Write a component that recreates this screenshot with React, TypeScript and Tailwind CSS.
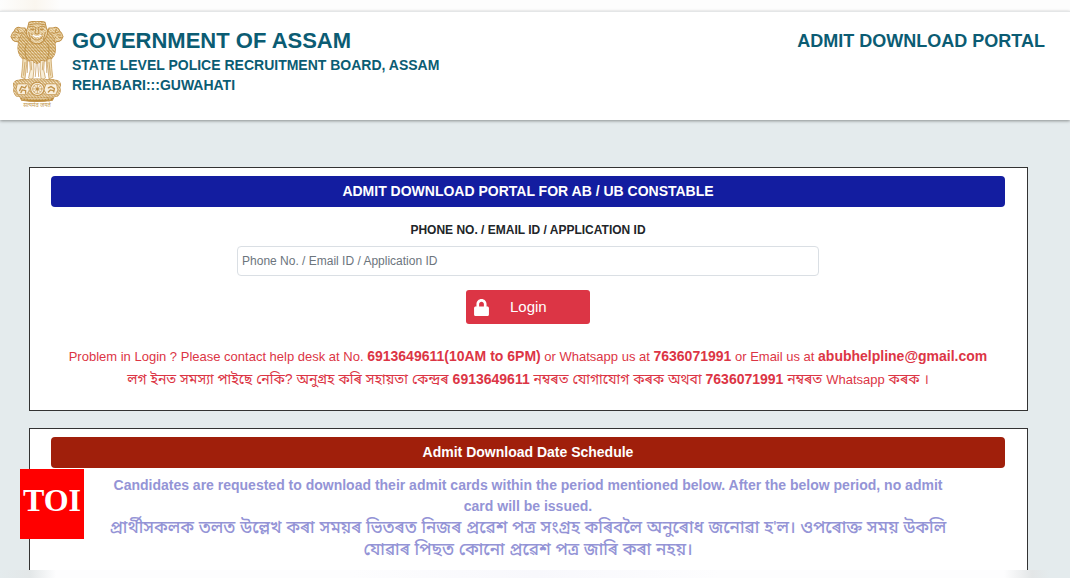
import React from 'react'
import { FaLock } from 'react-icons/fa'

interface PanelProps {
  title: string;
  barClass: string;
  className?: string;
  children: React.ReactNode;
}

function Emblem() {
  return (
    <svg viewBox="0 0 160 260" className="h-[87px] w-[54px] shrink-0" fill="none" stroke="#c1924a" strokeWidth="3" strokeLinecap="round" role="img" aria-label="Emblem of India">
      <defs>
        <pattern id="fur" width="9" height="10" patternUnits="userSpaceOnUse">
          <path d="M1 1l3 4M6 5l2 4" stroke="#f8ecd2" strokeWidth="2.4" />
        </pattern>
        <pattern id="hatch" width="9" height="8" patternUnits="userSpaceOnUse">
          <path d="M1 1l3 3M6 4l2 3" stroke="#b98433" strokeWidth="1.8" />
        </pattern>
      </defs>

      {/* side lions */}
      <path d="M30 20c-8-4-16 2-18 10-5 4-9 10-10 17 4 4 3 10 8 11 4 5 10 2 14 5l14 18 14-40-8-20z" fill="#f2e0ba" />
      <path d="M130 20c8-4 16 2 18 10 5 4 9 10 10 17-4 4-3 10-8 11-4 5-10 2-14 5l-14 18-14-40 8-20z" fill="#f2e0ba" />
      <path d="M30 20c-8-4-16 2-18 10l-8 18 32 30 16-37-8-20zM130 20c8-4 16 2 18 10l8 18-32 30-16-37 8-20z" fill="url(#hatch)" stroke="none" />
      <path d="M14 32l10 4M8 42l12-1M6 51l10-3M22 24l4 10M24 48l8 8M28 38l8-4M146 32l-10 4M152 42l-12-1M154 51l-10-3M138 24l-4 10M136 48l-8 8M132 38l-8-4" />

      {/* manes */}
      <path d="M48 28C34 36 26 52 24 70c-3 16 0 30 12 42 8 8 18 6 24 8l20 6 20-6c8-2 16 0 24-8 12-12 13-26 10-42-2-18-10-34-24-42z" fill="#c4974a" />
      <path d="M48 28C34 36 26 52 24 70c-3 16 0 30 12 42 8 8 18 6 24 8l20 6 20-6c8-2 16 0 24-8 12-12 13-26 10-42-2-18-10-34-24-42z" fill="url(#fur)" stroke="none" />
      <path d="M50 66c-8 14-8 30 0 48M110 66c8 14 8 30 0 48" stroke="#b07f30" strokeWidth="2" />

      {/* front lion */}
      <path d="M56 4c14-4 34-4 48 0l4 16c6 10 4 22-2 30-6 12-16 18-26 18s-20-6-26-18c-6-8-8-20-2-30z" fill="#f3e3c0" />
      <path d="M56 4c14-4 34-4 48 0l4 16c6 10 4 22-2 30-6 12-16 18-26 18s-20-6-26-18c-6-8-8-20-2-30z" fill="url(#hatch)" stroke="none" />
      <path d="M58 11c14-4 30-4 44 0M56 18c8-4 14-3 20 2M104 18c-8-4-14-3-20 2" />
      <path d="M62 25h8M90 25h8" strokeWidth="5" />
      <path d="M77 20l-3 16c4 4 8 4 12 0l-3-16M64 38c6 12 26 12 32 0M64 46c8 14 24 14 32 0M55 34l6 22M105 34l-6 22" />
      <path d="M68 43c8 5 16 5 24 0" stroke="#fff" strokeWidth="4" />

      {/* legs */}
      <path d="M38 112l-2 30-3 26 11 5 5-42 1-15zM122 112l2 30 3 26-11 5-5-42-1-15z" fill="#f0dfba" strokeWidth="2" />
      <path d="M58 118l2 28-5 24c4 6 10 5 13 2l3-28-1-24zM102 118l-2 28 5 24c-4 6-10 5-13 2l-3-28 1-24z" fill="#f8eed8" strokeWidth="2" />
      <path d="M78 124l-3 42M82 124l3 42M44 124l-4 38M116 124l4 38M62 122l2 24M98 122l-2 24M52 120l-1 34M108 120l1 34" strokeWidth="2" />
      <path d="M70 176h20M30 176h18M112 176h18" strokeWidth="4" />

      {/* abacus with the wheel */}
      <path d="M18 178c40-6 84-6 124 0 10 6 10 14 6 20 3 10 1 20-6 26-40 8-84 8-124 0-7-6-9-16-6-26-4-6-4-14 6-20z" fill="#cda563" />
      <path d="M18 178c40-6 84-6 124 0 10 6 10 14 6 20 3 10 1 20-6 26-40 8-84 8-124 0-7-6-9-16-6-26-4-6-4-14 6-20z" fill="url(#fur)" stroke="none" />
      <path d="M22 188h30l5 18-8 14H24l-6-14zM108 188h30l4 18-6 14h-27l-8-14z" fill="#f9efdc" strokeWidth="2" />
      <path d="M28 208l6-12 10 4 4-6M32 214l4-8 10 2v8M114 200l8-4 10 6-2 10M114 212l6-6 8 2" strokeWidth="4" />
      <circle cx="81" cy="203" r="20" fill="#faf0dc" />
      <circle cx="81" cy="203" r="14" strokeWidth="2" />
      <path d="M81 190v26M68 203h26M72 194l18 18M90 194l-18 18" strokeWidth="2" />
      <circle cx="81" cy="203" r="3" fill="#bb8a35" />
      <path d="M30 229c32 6 70 6 100 0l-4 8c-30 5-62 5-92 0z" fill="#bb8a35" />
      <path d="M36 233h88" stroke="#e9cf9b" strokeDasharray="3 6" />

      <text x="80" y="257" textAnchor="middle" fontSize="17" fill="#c49a50" stroke="none" className="font-['Noto_Sans','Liberation_Sans',sans-serif]">सत्यमेव जयते</text>
    </svg>
  )
}

function Panel({ title, barClass, className = '', children }: PanelProps) {
  return (
    <section className={`border-[#333] bg-white pt-2 pr-[22px] pl-[21px] ${className}`}>
      <h2 className={`rounded py-1 text-center text-sm leading-[23px] font-bold text-white ${barClass}`}>{title}</h2>
      {children}
    </section>
  )
}

function LoginForm() {
  return (
    <form className="flex flex-col items-center pt-[13px]" onSubmit={(e) => e.preventDefault()}>
      <label htmlFor="loginId" className="text-xs leading-5 font-bold text-[#212529]">
        PHONE NO. / EMAIL ID / APPLICATION ID
      </label>
      <input
        id="loginId"
        type="text"
        placeholder="Phone No. / Email ID / Application ID"
        className="mt-[6px] h-[30px] w-[61%] rounded border border-[#dadfe4] px-1 text-xs text-[#495057] placeholder:text-[#6c757d]"
      />
      <button type="submit" className="mt-[14px] flex h-[34px] w-[124px] items-center rounded-[3px] bg-[#dc3545] pl-[7px] text-white">
        <FaLock className="size-[17px]" />
        <span className="ml-5 text-[15px]">Login</span>
      </button>
    </form>
  )
}

export default function App() {
  return (
    <div className="relative overflow-hidden bg-[#e4ebed] font-['Liberation_Sans','Noto_Sans_Bengali','Noto_Sans',sans-serif]">
      <div className="h-[11px] bg-[linear-gradient(to_right,#fdfdfd,#faf6ef_35px,#fdfdfd_60px)]" />
      <header className="relative flex h-[109px] items-start border-t border-[#e4e6e7] bg-white px-[10px] pt-[9px] shadow-[0_1px_3px_rgba(0,0,0,0.4)]">
        <Emblem />
        <div className="ml-2 flex-1 pt-1 font-bold text-[#0b5c73]">
          <h1 className="text-[22px] leading-8">GOVERNMENT OF ASSAM</h1>
          <p className="text-sm leading-4">STATE LEVEL POLICE RECRUITMENT BOARD, ASSAM</p>
          <p className="pt-1 text-sm leading-4">REHABARI:::GUWAHATI</p>
        </div>
        <p className="pt-1 pr-[15px] text-lg leading-8 font-bold text-[#0b5c73]">ADMIT DOWNLOAD PORTAL</p>
      </header>

      <main className="mr-[42px] ml-[29px] flex flex-col gap-[17px] pt-[47px]">
        <Panel title="ADMIT DOWNLOAD PORTAL FOR AB / UB CONSTABLE" barClass="bg-[#131da0]" className="border">
          <LoginForm />
          <div className="pt-[21px] pb-[19px] text-center text-[13px] leading-[22px] text-[#dc3545]">
            <p>
              Problem in Login ? Please contact help desk at No. <b className="text-sm leading-[22px]">6913649611(10AM to 6PM)</b> or Whatsapp us at{' '}
              <b className="text-sm leading-[22px]">7636071991</b> or Email us at <b className="text-sm leading-[22px]">abubhelpline@gmail.com</b>
            </p>
            <p lang="as" className="text-sm leading-[22px]">
              লগ ইনত সমস্যা পাইছে নেকি? অনুগ্ৰহ কৰি সহায়তা কেন্দ্ৰৰ <b>6913649611</b> নম্বৰত যোগাযোগ কৰক অথবা{' '}
              <b>7636071991</b> নম্বৰত <span className="text-[13px]">Whatsapp</span> কৰক ।
            </p>
          </div>
        </Panel>

        <Panel title="Admit Download Date Schedule" barClass="bg-[#a01f0b]" className="border border-b-0">
          <div className="px-12 pt-[7px] pb-[9px] text-center font-bold text-[#9494d6]">
            <p className="text-sm leading-[21px]">
              Candidates are requested to download their admit cards within the period mentioned below. After the below period, no admit card will be issued.
            </p>
            <p lang="as" className="text-[17px] leading-[22px] font-medium">
              প্ৰাৰ্থীসকলক তলত উল্লেখ কৰা সময়ৰ ভিতৰত নিজৰ প্ৰৱেশ পত্ৰ সংগ্ৰহ কৰিবলৈ অনুৰোধ জনোৱা হ'ল। ওপৰোক্ত সময় উকলি যোৱাৰ পিছত কোনো প্ৰৱেশ পত্ৰ জাৰি কৰা নহয়।
            </p>
          </div>
        </Panel>
      </main>

      <div className="h-2 bg-[linear-gradient(to_right,#e4ebed,#e3e7e8_30px,#fdfdfe_56px,#fdfdfe_350px,#f8f8fc_50%,#fdfdfe_720px,#fdfdfe_calc(100%_-_66px),#e3e6e7_calc(100%_-_38px),#e4ebed_calc(100%_-_20px))]" />

      <div className="absolute top-[469px] left-5 flex h-[70px] w-16 items-center justify-center bg-[#ff0000] pb-2 font-['Liberation_Serif',serif] text-[32px] leading-none font-bold text-white">
        TOI
      </div>
    </div>
  )
}
